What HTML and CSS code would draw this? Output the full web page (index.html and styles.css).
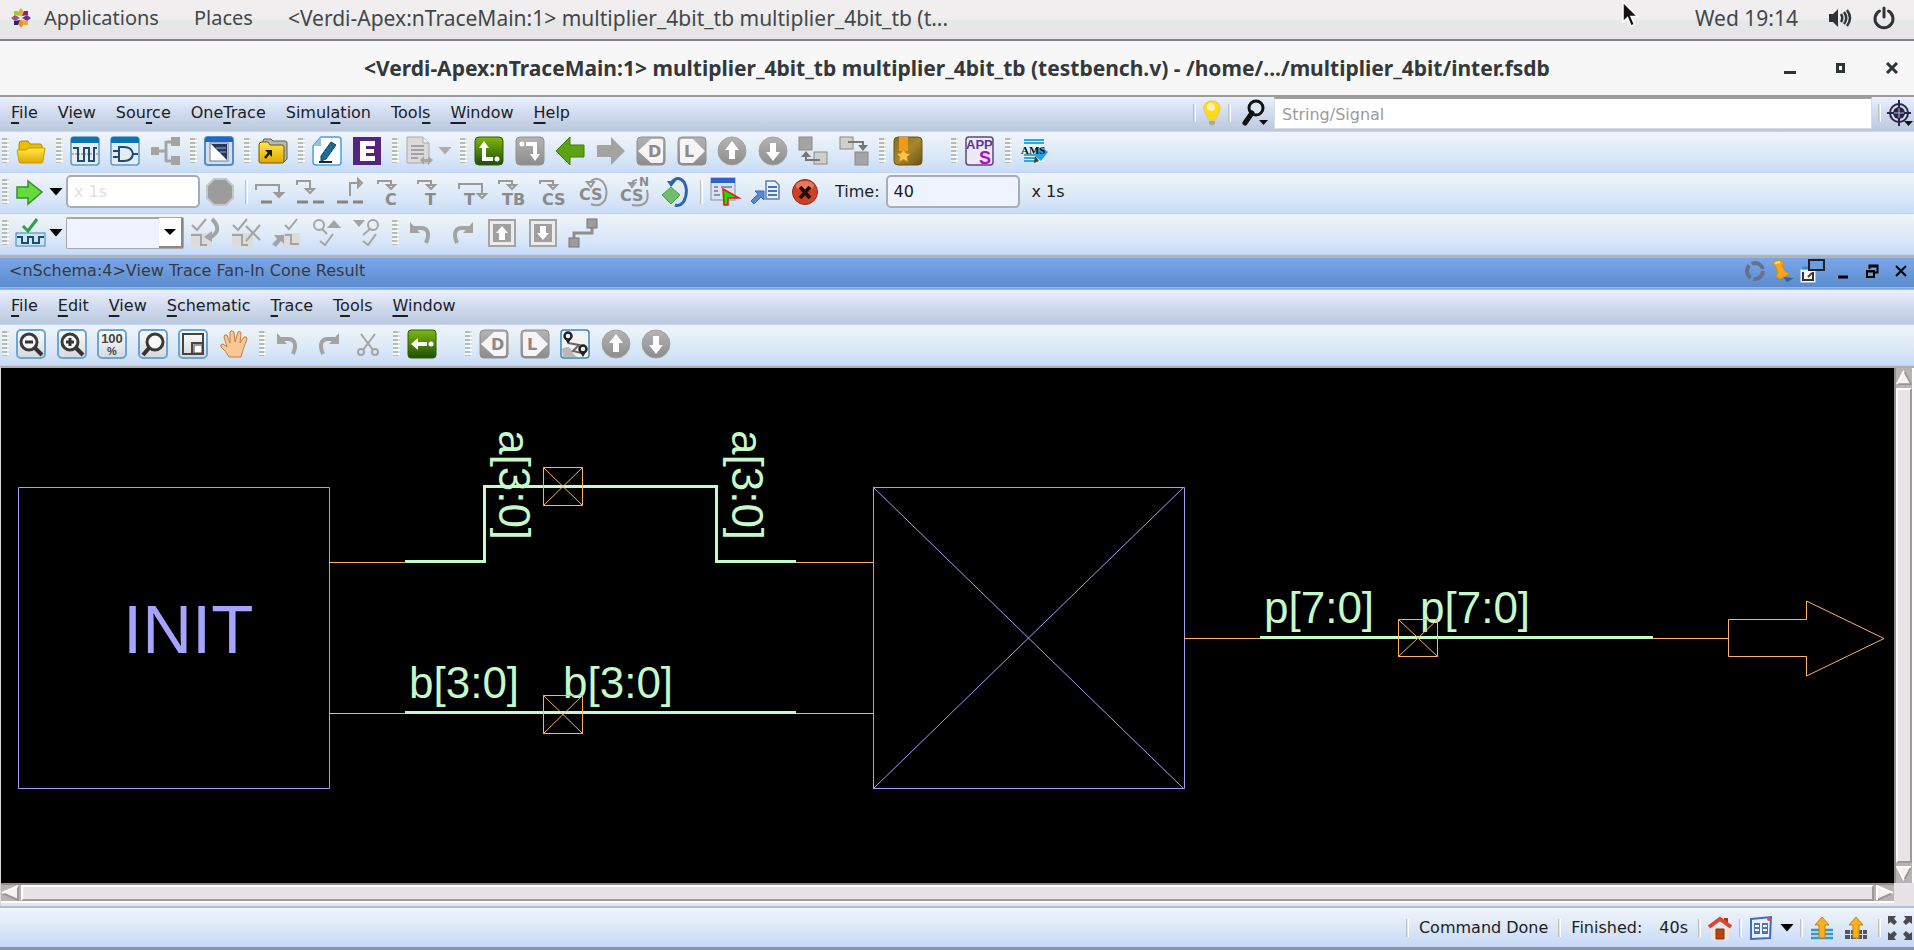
FILE: index.html
```html
<!DOCTYPE html>
<html lang="en">
<head>
<meta charset="utf-8">
<title>Verdi-Apex nTraceMain</title>
<link rel="stylesheet" href="styles.css">
</head>
<body>
<svg class="defs" aria-hidden="true">
  <defs>
    <linearGradient id="gGray" x1="0" y1="0" x2="0" y2="1"><stop offset="0" stop-color="#b4b4b4"/><stop offset="1" stop-color="#8c8c8c"/></linearGradient>
    <linearGradient id="gGreen" x1="0" y1="0" x2="0" y2="1"><stop offset="0" stop-color="#7fb80e"/><stop offset="1" stop-color="#1f4d05"/></linearGradient>
    <linearGradient id="gYellow" x1="0" y1="0" x2="0" y2="1"><stop offset="0" stop-color="#ffe94a"/><stop offset="1" stop-color="#e0a800"/></linearGradient>
    <linearGradient id="gBook" x1="0" y1="0" x2="1" y2="1"><stop offset="0" stop-color="#8a6a1c"/><stop offset=".5" stop-color="#a8872e"/><stop offset="1" stop-color="#6a5010"/></linearGradient>
    <linearGradient id="gPanel" x1="0" y1="0" x2="0" y2="1"><stop offset="0" stop-color="#fdfdfd"/><stop offset="1" stop-color="#d4d8dc"/></linearGradient>
  </defs>
  <symbol id="i-up" viewBox="0 0 30 30"><circle cx="15" cy="15" r="14" fill="url(#gGray)" stroke="#a2a2a2"/><path d="M15 5 22 14H18V23H12V14H8Z" fill="#fff"/></symbol>
  <symbol id="i-down" viewBox="0 0 30 30"><circle cx="15" cy="15" r="14" fill="url(#gGray)" stroke="#a2a2a2"/><path d="M15 25 22 16H18V7H12V16H8Z" fill="#fff"/></symbol>
  <symbol id="i-undo" viewBox="0 0 30 30"><path d="M8 10H15C22 10 24 16 20 25" fill="none" stroke="#a3a3a3" stroke-width="4"/><path d="M4 4V15H14Z" fill="#a3a3a3"/></symbol>
  <symbol id="i-redo" viewBox="0 0 30 30"><path d="M22 10H15C8 10 6 16 10 25" fill="none" stroke="#a3a3a3" stroke-width="4"/><path d="M26 4V15H16Z" fill="#a3a3a3"/></symbol>
</svg>

<header class="panel">
  <svg class="logo" width="20" height="20" viewBox="0 0 20 20"><path d="M10 0 13 4 10 9 7 4Z" fill="#e8b030"/><path d="M20 10 16 13 11 10 16 7Z" fill="#5b3590"/><path d="M10 20 7 16 10 11 13 16Z" fill="#e8902c"/><path d="M0 10 4 7 9 10 4 13Z" fill="#a14f8c"/><path d="M3 3H7L9 8 3 7Z" fill="#9ccd2a"/><path d="M13 3H17V7L11 8Z" fill="#932279"/><path d="M3 13 9 12 7 17H3Z" fill="#262577"/><path d="M11 12 17 13V17H13Z" fill="#efa724"/></svg>
  <button class="panel-item">Applications</button>
  <button class="panel-item">Places</button>
  <button class="panel-item panel-task">&lt;Verdi-Apex:nTraceMain:1&gt; multiplier_4bit_tb multiplier_4bit_tb (t...</button>
  <svg class="cursor" width="18" height="28" viewBox="0 0 18 28"><path d="M2 2V22L6.500 17.500 10 26 13.500 24.500 10 16.500H16.500Z" fill="#111" stroke="#fff" stroke-width="1.500"/></svg>
  <time class="clock">Wed 19:14</time>
  <button class="panel-icon" aria-label="Volume"><svg width="24" height="22" viewBox="0 0 24 22"><path d="M1 7H5L10 2V20L5 15H1Z" fill="#2e3436"/><path d="M13 7Q15.500 11 13 15M16 5Q20.500 11 16 17M19 3Q25 11 19 19" fill="none" stroke="#2e3436" stroke-width="2.500"/></svg></button>
  <button class="panel-icon" aria-label="Power"><svg width="24" height="24" viewBox="0 0 24 24"><path d="M7.500 5A9 9 0 1 0 16.500 5" fill="none" stroke="#2e3436" stroke-width="3" stroke-linecap="round"/><path d="M12 2V11" stroke="#2e3436" stroke-width="3" stroke-linecap="round"/></svg></button>
</header>

<div class="titlebar">
  <h1 class="title">&lt;Verdi-Apex:nTraceMain:1&gt; multiplier_4bit_tb multiplier_4bit_tb (testbench.v) - /home/.../multiplier_4bit/inter.fsdb</h1>
  <div class="window-buttons">
    <button aria-label="Minimize"><svg width="16" height="16" viewBox="0 0 16 16"><path d="M2 12.500H14" stroke="#2e3436" stroke-width="3"/></svg></button>
    <button aria-label="Maximize"><svg width="16" height="16" viewBox="0 0 16 16"><rect x="4.500" y="4.500" width="6" height="7" fill="none" stroke="#2e3436" stroke-width="3"/></svg></button>
    <button aria-label="Close"><svg width="16" height="16" viewBox="0 0 16 16"><path d="M3 3 13 13M13 3 3 13" stroke="#2e3436" stroke-width="3"/></svg></button>
  </div>
</div>

<nav class="menubar">
  <button><u>F</u>ile</button>
  <button>V<u>i</u>ew</button>
  <button>Sou<u>r</u>ce</button>
  <button>One<u>T</u>race</button>
  <button>Simul<u>a</u>tion</button>
  <button>Tool<u>s</u></button>
  <button><u>W</u>indow</button>
  <button><u>H</u>elp</button>
  <div class="search">
    <span class="sep"></span>
    <button aria-label="Tips"><svg width="20" height="26" viewBox="0 0 20 26"><path d="M10 1C4 1 1 5 2 10C3 14 6 16 6 20H14C14 16 17 14 18 10C19 5 16 1 10 1Z" fill="#ffd91c" stroke="#e8c85c"/><ellipse cx="9" cy="7" rx="4" ry="4" fill="#fff6a8"/><path d="M7 21H13V24L10 25.500 7 24Z" fill="#a8a8a0"/></svg></button>
    <span class="sep"></span>
    <button class="find" aria-label="Find"><svg width="26" height="28" viewBox="0 0 26 28"><circle cx="14" cy="9" r="7" fill="#dfe6f6" stroke="#111" stroke-width="3"/><path d="M10 14 3 24" stroke="#111" stroke-width="5" stroke-linecap="round"/><path d="M17 21H26L21.500 26Z" fill="#111"/></svg></button>
    <input type="text" class="search-input" placeholder="String/Signal" aria-label="String or signal">
    <span class="sep"></span>
    <button aria-label="Locate"><svg width="26" height="28" viewBox="0 0 26 28"><circle cx="12" cy="14" r="9" fill="#d8dcec" stroke="#26264a" stroke-width="2"/><circle cx="12" cy="14" r="6" fill="#26264a"/><path d="M12 1V27M0 14H24" stroke="#26264a" stroke-width="2"/><path d="M12 9V19M7 14H17" stroke="#b4b8d8"/><path d="M17 22H26L21.500 27Z" fill="#111"/></svg></button>
  </div>
</nav>

<div class="toolbar">
  <span class="handle"></span>
  <button class="tool" aria-label="Open"><svg viewBox="0 0 30 30"><path d="M3 8Q3 5 6 5H12L14 8H24Q26 8 26 10V25H3Z" fill="#e9bf00" stroke="#b08a00"/><path d="M1 14H10L13 12H29L27 25Q27 27 25 27H5Q3 27 3 25Z" fill="url(#gYellow)" stroke="#c79b00"/></svg></button>
  <span class="handle"></span>
  <div class="group">
    <button class="tool" aria-label="New waveform"><svg viewBox="0 0 30 30"><rect x="1" y="1" width="28" height="28" rx="3" fill="#e6edf2" stroke="#5a9cc6" stroke-width="1.500"/><path d="M1 7V4Q1 1 4 1H26Q29 1 29 4V7Z" fill="#0c74ac"/><path d="M2 18H28" stroke="#e05040" stroke-dasharray="2 1"/><path d="M3 12H8V25H14V12H19V25H24V12H27" fill="none" stroke="#1d4e72" stroke-width="2"/></svg></button>
    <button class="tool" aria-label="New schematic"><svg viewBox="0 0 30 30"><rect x="1" y="1" width="28" height="28" rx="3" fill="#e6edf2" stroke="#5a9cc6" stroke-width="1.500"/><path d="M1 7V4Q1 1 4 1H26Q29 1 29 4V7Z" fill="#0c74ac"/><path d="M9 11H14Q22 11 23 18Q22 25 14 25H9ZM3 15H9M3 21H9M23 18H28" fill="none" stroke="#1d4e72" stroke-width="2"/></svg></button>
    <button class="tool" aria-label="Hierarchy"><svg viewBox="0 0 30 30"><path d="M9 15H16M16 6H22M16 25H22M16 5V26" fill="none" stroke="#a4a4a4" stroke-width="3"/><path d="M1 11H9V19H1ZM21 1H30V10H21ZM21 20H30V29H21Z" fill="#a4a4a4"/></svg></button>
  </div>
  <span class="handle"></span>
  <button class="tool" aria-label="Source window"><svg viewBox="0 0 30 30"><rect x="1" y="1" width="28" height="28" rx="3" fill="#d4dfec" stroke="#4f8cd0" stroke-width="2"/><path d="M1 6V4Q1 1 4 1H26Q29 1 29 4V6Z" fill="#1f66c4"/><rect x="6" y="7" width="18" height="18" fill="#fff" stroke="#6d7b96"/><path d="M7 8H23V24Z" fill="#26365e"/><path d="M12 12H22M16 16H22" stroke="#9fb0d4"/></svg></button>
  <span class="handle"></span>
  <button class="tool" aria-label="Open recent"><svg viewBox="0 0 30 30"><path d="M5 5Q5 3 7 3H13L15 5H27Q29 5 29 7V23L26 26H5Z" fill="#b4b8bc" stroke="#5c5c50"/><path d="M1 9Q1 6 4 6H10L12 9H24Q26 9 26 11V25Q26 27 24 27H3Q1 27 1 25Z" fill="url(#gYellow)" stroke="#6d5a00"/><path d="M7 22 12 16" fill="none" stroke="#1c1a00" stroke-width="2.500"/><path d="M7 14H14V21Z" fill="#1c1a00"/></svg></button>
  <span class="handle"></span>
  <div class="group">
    <button class="tool" aria-label="Edit source"><svg viewBox="0 0 30 30"><path d="M9 1H26Q29 1 29 4V26Q29 29 26 29H4Q1 29 1 26V10Z" fill="#fdfeff" stroke="#4ba0dc" stroke-width="1.500"/><path d="M1 10H9V1Z" fill="#8fc4ec"/><path d="M9 20 19 6 24 9 14 23 9 25Z" fill="#1d6c9a" stroke="#0f4466"/><path d="M7 26H20" stroke="#222" stroke-width="2"/></svg></button>
    <button class="tool" aria-label="Editor"><svg viewBox="0 0 30 30"><rect x="1" y="1" width="28" height="28" fill="#56237f"/><path d="M8 5H23V10H14V13H22V17H14V20H23V25H8Z" fill="#fff"/></svg></button>
  </div>
  <span class="handle"></span>
  <button class="tool" aria-label="Report"><svg viewBox="0 0 30 30"><path d="M1 1H17L23 7V27H1Z" fill="#dadada" stroke="#aaa"/><path d="M17 1V7H23" fill="#efefef" stroke="#aaa"/><path d="M5 10H18M5 14H18M5 18H18M5 22H12" stroke="#a2a2a2" stroke-width="2"/><path d="M14 24 18 20V23H22V20L27 24 22 29V26H18V29Z" fill="#a5a5a5"/></svg></button>
  <button class="drop drop-dim" aria-label="Report options"></button>
  <span class="handle"></span>
  <div class="group group-wide">
    <button class="tool" aria-label="Trace up"><svg viewBox="0 0 30 30"><rect x="1" y="1" width="28" height="28" rx="4" fill="url(#gGreen)" stroke="#2c5f08"/><path d="M10 5 15 12H12V21H19V25H8V12H5Z" fill="#fff"/><circle cx="23" cy="23" r="2.500" fill="#fff"/></svg></button>
    <button class="tool" aria-label="Trace down"><svg viewBox="0 0 30 30"><rect x="1" y="1" width="28" height="28" rx="4" fill="url(#gGray)" stroke="#929292"/><circle cx="7" cy="8" r="2.500" fill="#fff"/><path d="M11 6H22V18H25L20 25 15 18H18V10H11Z" fill="#fff"/></svg></button>
    <button class="tool" aria-label="Back"><svg viewBox="0 0 30 30"><path d="M1 15 15 1V9H29V21H15V29Z" fill="#5ba312" stroke="#3f7c08"/></svg></button>
    <button class="tool" aria-label="Forward"><svg viewBox="0 0 30 30"><path d="M29 15 15 1V9H1V21H15V29Z" fill="#a3a3a3"/></svg></button>
    <button class="tool" aria-label="Trace driver"><svg viewBox="0 0 30 30"><rect x="1" y="1" width="28" height="28" rx="4" fill="url(#gGray)" stroke="#8e8e8e"/><path d="M2 15 15 3H25Q27 3 27 5V25Q27 27 25 27H15Z" fill="#f6f4f4"/><text x="12" y="21" class="glyph glyph-16">D</text></svg></button>
    <button class="tool" aria-label="Trace load"><svg viewBox="0 0 30 30"><rect x="1" y="1" width="28" height="28" rx="4" fill="url(#gGray)" stroke="#8e8e8e"/><path d="M28 15 16 3H5Q3 3 3 5V25Q3 27 5 27H16Z" fill="#f6f4f4"/><text x="7" y="21" class="glyph glyph-16">L</text></svg></button>
    <button class="tool" aria-label="Previous"><svg><use href="#i-up"/></svg></button>
    <button class="tool" aria-label="Next"><svg><use href="#i-down"/></svg></button>
    <button class="tool" aria-label="Signal up"><svg viewBox="0 0 30 30"><rect x="1" y="1" width="13" height="13" fill="#a4a4a4" stroke="#8a8a8a"/><rect x="16" y="16" width="13" height="12" fill="#cfcfcf" stroke="#8a8a8a"/><path d="M8 18V24H22" fill="none" stroke="#777" stroke-width="2"/><path d="M3 21 8 15 13 21Z" fill="#777"/></svg></button>
    <button class="tool" aria-label="Signal down"><svg viewBox="0 0 30 30"><rect x="1" y="1" width="13" height="12" fill="#cfcfcf" stroke="#8a8a8a"/><rect x="16" y="16" width="13" height="13" fill="#a4a4a4" stroke="#8a8a8a"/><path d="M9 6H24V11" fill="none" stroke="#777" stroke-width="2"/><path d="M19 9H29L24 15Z" fill="#777"/></svg></button>
  </div>
  <span class="handle"></span>
  <button class="tool" aria-label="Bookmarks"><svg viewBox="0 0 30 30"><rect x="1" y="1" width="28" height="28" rx="4" fill="url(#gBook)" stroke="#6b5314"/><path d="M6 1H15V15H6Z" fill="#f29a17"/><path d="M10.500 13 13 17 17 18 14 21 15 26 10.500 23.500 6 26 7 21 4 18 8 17Z" fill="#ffc24a" stroke="#d08a10"/></svg></button>
  <span class="handle handle-far"></span>
  <button class="tool" aria-label="Apps"><svg viewBox="0 0 30 30"><rect x="1" y="1" width="27" height="28" rx="3" fill="#eeeaf4" stroke="#5d4a72" stroke-width="1.500"/><text x="1" y="13" class="apps-text">APP</text><text x="14" y="28" class="apps-s">S</text></svg></button>
  <span class="handle"></span>
  <button class="tool" aria-label="AMS"><svg viewBox="0 0 30 30"><path d="M5 2H25V26H5Z" fill="#e4f5fc"/><path d="M5 4H25M5 7H25M5 19H18M5 22H17M5 25H16" stroke="#35a6d6" stroke-width="2"/><path d="M16 12H24L29 16 22 25 17 21Z" fill="#25a0d8"/><text x="2" y="18" class="ams-text">AMS</text><path d="M16 20 20 25 15 27Z" fill="#503a20"/></svg></button>
</div>

<div class="toolbar">
  <span class="handle"></span>
  <button class="tool" aria-label="Run"><svg viewBox="0 0 30 30"><path d="M1 10H12V4L26 15 12 27V21H1Z" fill="#63dc3c" stroke="#3c8c2c" stroke-width="1.500"/></svg></button>
  <button class="drop" aria-label="Run options"></button>
  <input type="text" class="field field-off" value="x 1s" aria-label="Step size" disabled>
  <button class="tool tool-stop" aria-label="Stop"><svg viewBox="0 0 30 30"><path d="M9 2H21L28 9V21L21 28H9L2 21V9Z" fill="#9c9c9c" stroke="#c6c6c6" stroke-width="2"/></svg></button>
  <span class="sep sep-wide"></span>
  <div class="group group-steps">
    <button class="tool" aria-label="Step over"><svg viewBox="0 0 30 30"><path d="M1 13V8H24V19M20 16 24 20 28 16Z" class="step"/><path d="M6 25H17" class="bar"/></svg></button>
    <button class="tool" aria-label="Step into"><svg viewBox="0 0 30 30"><path d="M1 8V4H14V13M10 12 14 16 18 12Z" class="step"/><path d="M1 25H12M17 25H28" class="bar"/></svg></button>
    <button class="tool" aria-label="Step out"><svg viewBox="0 0 30 30"><path d="M14 19V6H24M22 2 26 6 22 10Z" class="step"/><path d="M1 25H12M17 25H27" class="bar"/></svg></button>
    <button class="tool" aria-label="Next call"><svg viewBox="0 0 30 30"><path d="M1 7V4H14V9M10 8 14 12 18 8Z" class="step"/><text x="8" y="28" class="glyph glyph-16">C</text></svg></button>
    <button class="tool" aria-label="Next thread"><svg viewBox="0 0 30 30"><path d="M1 7V4H14V9M10 8 14 12 18 8Z" class="step"/><text x="8" y="28" class="glyph glyph-16">T</text></svg></button>
    <button class="tool" aria-label="Step thread"><svg viewBox="0 0 30 30"><path d="M1 12V7H24V18M20 17 24 21 28 17Z" class="step"/><text x="6" y="28" class="glyph glyph-16">T</text></svg></button>
    <button class="tool" aria-label="Step testbench"><svg viewBox="0 0 30 30"><path d="M1 7V4H14V9M10 8 14 12 18 8Z" class="step"/><text x="4" y="28" class="glyph glyph-16">TB</text></svg></button>
    <button class="tool" aria-label="Step constraint solver"><svg viewBox="0 0 30 30"><path d="M1 7V4H14V9M10 8 14 12 18 8Z" class="step"/><text x="3" y="28" class="glyph glyph-16">CS</text></svg></button>
    <button class="tool" aria-label="Loop constraint solver"><svg viewBox="0 0 30 30"><path d="M12 4Q18 -1 24 5Q30 13 26 23Q21 31 12 27M8 5H15L12 10Z" class="step"/><text x="0" y="23" class="glyph glyph-16">CS</text></svg></button>
    <button class="tool" aria-label="Next constraint solver"><svg viewBox="0 0 30 30"><path d="M17 3Q12 3 12 8M9 6H15L12 10ZM27 13Q31 31 12 28" class="step"/><text x="0" y="24" class="glyph glyph-16">CS</text><text x="19" y="9" class="glyph glyph-12">N</text></svg></button>
    <button class="tool" aria-label="Rerun"><svg viewBox="0 0 30 30"><path d="M12 5Q18 -2 24 5Q29 14 24 24Q20 30 15 28" fill="none" stroke="#2f63ae" stroke-width="3"/><path d="M7 4H16L11 10Z" fill="#2f63ae"/><path d="M11 10 20 18 11 27 2 18Z" fill="#6fbe68" stroke="#4a9c46"/></svg></button>
  </div>
  <span class="sep sep-wide"></span>
  <div class="group">
    <button class="tool" aria-label="Set cursor"><svg viewBox="0 0 30 30"><rect x="1" y="1" width="24" height="22" fill="#dde3ec" stroke="#7e8fae"/><path d="M1 1H25V6H1Z" fill="#2f62c8"/><path d="M4 10H8M11 10H22M4 14H8M4 18H10" stroke="#8a94a8" stroke-width="2"/><path d="M13 12 29 21 18 21V28H14Z" fill="#16e000" stroke="#e81818" stroke-width="1.500"/></svg></button>
    <button class="tool" aria-label="Dump"><svg viewBox="0 0 30 30"><path d="M16 4H25L29 8V22H16Z" fill="#eaf1fc" stroke="#5c7fae" stroke-width="1.500"/><path d="M18 10H27M18 14H27M18 18H27" stroke="#4472c0" stroke-width="2"/><path d="M1 24 8 17 5 14H14V23L11 20 4 27Z" fill="#5b87da" stroke="#3a66b8"/></svg></button>
    <button class="tool" aria-label="Abort"><svg viewBox="0 0 30 30"><circle cx="15" cy="15" r="12.500" fill="#cf4124" stroke="#8e2a14"/><ellipse cx="15" cy="9" rx="9" ry="5" fill="#e57a5c"/><path d="M10 10 20 21M20 10 10 21" stroke="#220a06" stroke-width="4"/></svg></button>
  </div>
  <label class="time-label" for="time">Time:</label>
  <input type="text" class="field" id="time" value="40">
  <span class="unit">x 1s</span>
</div>

<div class="toolbar">
  <span class="handle"></span>
  <button class="tool" aria-label="Verify waveform"><svg viewBox="0 0 30 30"><path d="M7 8 12 13 21 1" fill="none" stroke="#2fa044" stroke-width="3"/><rect x="0" y="15" width="29" height="13" fill="#cfe4f2" stroke="#3a86b4"/><path d="M1 19H6V25H12V19H17V25H23V19H28" fill="none" stroke="#1d4e72" stroke-width="2"/></svg></button>
  <button class="drop" aria-label="Verify options"></button>
  <span class="combo"><select aria-label="Assertion"><option></option></select><span class="combo-arrow"></span></span>
  <div class="group group-five">
    <button class="tool" aria-label="Apply"><svg viewBox="0 0 30 30"><path d="M1 15H22V29H1Z" fill="#dcdcdc"/><path d="M2 7 7 12 16 1M1 17H11V27H17" class="dim"/><path d="M22 1Q33 12 21 19" fill="none" stroke="#a4a4a4" stroke-width="4"/><path d="M14 19 22 13V24Z" fill="#a4a4a4"/></svg></button>
    <button class="tool" aria-label="Remove"><svg viewBox="0 0 30 30"><path d="M1 15H22V29H1Z" fill="#dcdcdc"/><path d="M2 7 7 12 16 1M1 17H11V27H17M15 8 29 22M29 7 15 23" class="dim"/></svg></button>
    <button class="tool" aria-label="Go to"><svg viewBox="0 0 30 30"><path d="M12 15H29V29H12Z" fill="#dcdcdc"/><path d="M14 7 18 11 26 1M14 17H20V26H28" class="dim"/><path d="M1 26 6 21 3 17H13V26L10 23 5 29Z" fill="#a4a4a4"/></svg></button>
    <button class="tool" aria-label="Find previous"><svg viewBox="0 0 30 30"><circle cx="7" cy="7" r="5" class="dim"/><path d="M10 11 15 16M8 23 13 27 21 16" class="dim"/><path d="M15 10 22 2 29 10Z" fill="#a4a4a4"/></svg></button>
    <button class="tool" aria-label="Find next"><svg viewBox="0 0 30 30"><circle cx="21" cy="7" r="5" class="dim"/><path d="M18 11 11 17M11 23 16 27 24 16" class="dim"/><path d="M1 2H13L7 9Z" fill="#a4a4a4"/></svg></button>
  </div>
  <span class="handle"></span>
  <div class="group group-five">
    <button class="tool" aria-label="Undo"><svg><use href="#i-undo"/></svg></button>
    <button class="tool" aria-label="Redo"><svg><use href="#i-redo"/></svg></button>
    <button class="tool" aria-label="Scope up"><svg viewBox="0 0 30 30"><rect x="2" y="2" width="26" height="26" fill="#ececec" stroke="#a4a4a4" stroke-width="2"/><rect x="6" y="6" width="18" height="18" fill="#a0a0a0"/><path d="M15 8 21 15H18V22H12V15H9Z" fill="#fff"/></svg></button>
    <button class="tool" aria-label="Scope down"><svg viewBox="0 0 30 30"><rect x="2" y="2" width="26" height="26" fill="#ececec" stroke="#a4a4a4" stroke-width="2"/><rect x="6" y="6" width="18" height="18" fill="#a0a0a0"/><path d="M15 22 21 15H18V8H12V15H9Z" fill="#fff"/></svg></button>
    <button class="tool" aria-label="Connect"><svg viewBox="0 0 30 30"><path d="M6 22V15H24V8" fill="none" stroke="#8e8e8e" stroke-width="3"/><rect x="19" y="1" width="10" height="9" fill="#9c9c9c" stroke="#777"/><rect x="1" y="20" width="10" height="9" fill="#9c9c9c" stroke="#777"/></svg></button>
  </div>
</div>

<div class="subtitle">
  <h2>&lt;nSchema:4&gt;View Trace Fan-In Cone Result</h2>
  <div class="sub-buttons">
    <button aria-label="Refresh"><svg width="22" height="22" viewBox="0 0 22 22"><circle cx="11" cy="11" r="8" fill="none" stroke="#68708e" stroke-width="4" stroke-dasharray="14 3"/></svg></button>
    <button aria-label="Pin"><svg width="26" height="24" viewBox="0 0 26 24"><path d="M13 18 24 19 17 23Z" fill="#3c5f9a"/><path d="M2 4 9 1 14 3 12 7 15 12 19 15 10 20 6 17 8 14 6 8Z" fill="#f7a71c" stroke="#e08a08"/><path d="M5 4 10 3" stroke="#ffe08a" stroke-width="2"/></svg></button>
    <button aria-label="Undock"><svg width="26" height="26" viewBox="0 0 26 26"><rect x="2" y="13" width="12" height="10" fill="#f4f4f4" stroke="#f4f4f4" stroke-width="3"/><path d="M3 14V22H13V14" fill="none" stroke="#333" stroke-width="2"/><path d="M2 10H14" stroke="#2d8cf0" stroke-width="3"/><rect x="9" y="2" width="15" height="10" fill="#6d9ce2" stroke="#222" stroke-width="2"/><path d="M8 19 12 15" stroke="#444" stroke-width="2"/></svg></button>
    <button class="sub-win" aria-label="Minimize"><svg width="14" height="16" viewBox="0 0 14 16"><path d="M2 14H12" stroke="#000" stroke-width="3"/></svg></button>
    <button class="sub-win" aria-label="Restore"><svg width="14" height="16" viewBox="0 0 14 16"><path d="M4.500 6V2.500H12.500V9.500H10M4 3.500H13" fill="none" stroke="#000" stroke-width="2"/><path d="M2 8H9V14H2ZM2 8.500H9" fill="none" stroke="#000" stroke-width="2"/></svg></button>
    <button class="sub-win" aria-label="Close"><svg width="14" height="16" viewBox="0 0 14 16"><path d="M2 3 12 13M12 3 2 13" stroke="#000" stroke-width="2"/></svg></button>
  </div>
</div>

<nav class="menubar">
  <button><u>F</u>ile</button>
  <button><u>E</u>dit</button>
  <button><u>V</u>iew</button>
  <button><u>S</u>chematic</button>
  <button><u>T</u>race</button>
  <button>T<u>o</u>ols</button>
  <button><u>W</u>indow</button>
</nav>

<div class="toolbar">
  <span class="handle"></span>
  <div class="group group-zoom">
    <button class="tool" aria-label="Zoom out"><svg viewBox="0 0 30 30"><rect x="1" y="1" width="28" height="28" rx="4" class="tile"/><circle cx="13" cy="13" r="8" class="lens"/><path d="M9 13H17" stroke="#333" stroke-width="3"/><path d="M19 19 26 26" stroke="#333" stroke-width="4"/></svg></button>
    <button class="tool" aria-label="Zoom in"><svg viewBox="0 0 30 30"><rect x="1" y="1" width="28" height="28" rx="4" class="tile"/><circle cx="13" cy="13" r="8" class="lens"/><path d="M9 13H17M13 9V17" stroke="#333" stroke-width="3"/><path d="M19 19 26 26" stroke="#333" stroke-width="4"/></svg></button>
    <button class="tool" aria-label="Zoom 100%"><svg viewBox="0 0 30 30"><rect x="1" y="1" width="28" height="28" rx="4" class="tile"/><text x="15" y="14" class="pct pct-top">100</text><text x="15" y="26" class="pct">%</text></svg></button>
    <button class="tool" aria-label="Zoom area"><svg viewBox="0 0 30 30"><rect x="1" y="1" width="28" height="28" rx="4" class="tile"/><circle cx="17" cy="13" r="8" class="lens"/><path d="M11 19 5 26" stroke="#333" stroke-width="4"/></svg></button>
    <button class="tool" aria-label="Fit"><svg viewBox="0 0 30 30"><rect x="1" y="1" width="28" height="28" rx="4" class="tile"/><path d="M5 5H25V25H5ZM14 25V14H25" fill="none" stroke="#444" stroke-width="2"/><rect x="16" y="16" width="8" height="8" fill="#fff" stroke="#444"/></svg></button>
    <button class="tool" aria-label="Pan"><svg viewBox="0 0 30 30"><path d="M10 28Q7 22 2 18Q1 15 4 15L8 18 5 8Q5 5 8 6L11 14 11 3Q12 0 15 3L16 13 19 3Q21 1 22 4L21 14 25 8Q28 7 28 10L24 21 22 28Z" fill="#f7c795" stroke="#c4803c"/></svg></button>
  </div>
  <span class="handle"></span>
  <div class="group">
    <button class="tool" aria-label="Undo"><svg><use href="#i-undo"/></svg></button>
    <button class="tool" aria-label="Redo"><svg><use href="#i-redo"/></svg></button>
    <button class="tool" aria-label="Cut"><svg viewBox="0 0 30 30"><path d="M8 5 20 21M22 5 10 21" stroke="#a4a4a4" stroke-width="2"/><circle cx="8" cy="23" r="3" class="dim"/><circle cx="22" cy="23" r="3" class="dim"/></svg></button>
  </div>
  <span class="handle"></span>
  <button class="tool" aria-label="Fan-in"><svg viewBox="0 0 30 30"><rect x="1" y="1" width="28" height="28" rx="3" fill="url(#gGreen)" stroke="#2c5f08"/><path d="M4 15 11 9V13H20V17H11V21Z" fill="#fff"/><circle cx="24" cy="15" r="2.500" fill="#fff"/></svg></button>
  <span class="handle handle-far"></span>
  <div class="group group-five">
    <button class="tool" aria-label="Trace driver"><svg viewBox="0 0 30 30"><rect x="1" y="1" width="28" height="28" rx="4" fill="url(#gGray)" stroke="#8e8e8e"/><path d="M2 15 15 3H25Q27 3 27 5V25Q27 27 25 27H15Z" fill="#f6f4f4"/><text x="12" y="21" class="glyph glyph-16">D</text></svg></button>
    <button class="tool" aria-label="Trace load"><svg viewBox="0 0 30 30"><rect x="1" y="1" width="28" height="28" rx="4" fill="url(#gGray)" stroke="#8e8e8e"/><path d="M28 15 16 3H5Q3 3 3 5V25Q3 27 5 27H16Z" fill="#f6f4f4"/><text x="7" y="21" class="glyph glyph-16">L</text></svg></button>
    <button class="tool" aria-label="Trace path"><svg viewBox="0 0 30 30"><rect x="1" y="1" width="28" height="28" rx="3" fill="#f2f2f2" stroke="#3f86bf" stroke-width="1.500"/><path d="M2 20Q9 15 12 22T20 28H3Z" fill="#b8b8b8"/><path d="M8 14 19 16 13 22 21 24" fill="none" stroke="#666" stroke-width="2"/><circle cx="8" cy="7" r="3.500" fill="none" stroke="#222" stroke-width="2.500"/><path d="M5 10 8 15 11 10Z" fill="#222"/><circle cx="23" cy="20" r="3.500" fill="none" stroke="#222" stroke-width="2.500"/><path d="M20 23 23 28 26 23Z" fill="#222"/></svg></button>
    <button class="tool" aria-label="Previous"><svg><use href="#i-up"/></svg></button>
    <button class="tool" aria-label="Next"><svg><use href="#i-down"/></svg></button>
  </div>
</div>

<main class="view">
  <svg class="schematic" role="img" aria-label="Fan-in cone schematic">
    <g transform="translate(-1 -368)">
      <path class="block" d="M18.500 487.500H329.500V788.500H18.500Z"/>
      <path class="block" d="M873.500 487.500H1184.500V788.500H873.500Z"/>
      <path class="block" d="M873 487 1184 789M1184 487 873 789"/>
      <text class="net" transform="translate(499 430) rotate(90)">a[3:0]</text>
      <text class="net" transform="translate(732 430) rotate(90)">a[3:0]</text>
      <text class="net" x="409" y="698">b[3:0]</text>
      <text class="net" x="563" y="698">b[3:0]</text>
      <text class="net" x="1264" y="623">p[7:0]</text>
      <text class="net" x="1420" y="623">p[7:0]</text>
      <path class="wire" d="M405 561.500H484.500V486.500H716.500V561.500H796M405 712.500H796M1260 637.500H1653"/>
      <path class="pin" d="M329 562.500H406M796 562.500H873M329 713.500H406M796 713.500H873M1184 638.500H1260M1652 638.500H1728"/>
      <path class="pin" d="M543.500 467.500H582.500V505.500H543.500ZL582.500 505.500M582.500 467.500 543.500 505.500"/>
      <path class="pin" d="M543.500 695.500H582.500V733.500H543.500ZL582.500 733.500M582.500 695.500 543.500 733.500"/>
      <path class="pin" d="M1398.500 619.500H1437.500V656.500H1398.500ZL1437.500 656.500M1437.500 619.500 1398.500 656.500"/>
      <path class="pin" d="M1728.500 619.500H1806.500V601L1884 638.500 1806.500 676V656.500H1728.500Z"/>
      <text class="init" x="123" y="653">INIT</text>
    </g>
  </svg>
  <div class="scroll scroll-v">
    <svg width="16" height="18" viewBox="0 0 18 18"><path d="M9 2 17 17H1Z" fill="#f4f1f1"/><path d="M9 2 17 17H1" fill="none" stroke="#9a9696" stroke-width="2"/><path d="M9 2 1 17" stroke="#fff" stroke-width="2"/></svg>
    <span class="thumb"></span>
    <svg width="16" height="18" viewBox="0 0 18 18"><path d="M1 1H17L9 16Z" fill="#f4f1f1"/><path d="M17 1 9 16" stroke="#9a9696" stroke-width="2"/><path d="M17 1H1L9 16" fill="none" stroke="#fff" stroke-width="2"/></svg>
  </div>
  <div class="scroll scroll-h">
    <svg width="18" height="16" viewBox="0 0 18 16"><path d="M1 8 17 1V15Z" fill="#f4f1f1"/><path d="M17 1V15L1 8" fill="none" stroke="#9a9696" stroke-width="2"/><path d="M17 1 1 8" stroke="#fff" stroke-width="2"/></svg>
    <span class="thumb"></span>
    <svg width="18" height="16" viewBox="0 0 18 16"><path d="M17 8 1 1V15Z" fill="#f4f1f1"/><path d="M1 15 17 8" stroke="#9a9696" stroke-width="2"/><path d="M1 15V1L17 8" fill="none" stroke="#fff" stroke-width="2"/></svg>
  </div>
  <div class="corner"></div>
</main>

<footer class="status">
  <span class="sep"></span>
  <span class="status-text">Command Done</span>
  <span class="sep"></span>
  <span class="status-text">Finished:<span class="elapsed">40s</span></span>
  <span class="sep"></span>
  <button aria-label="Home"><svg width="26" height="26" viewBox="0 0 26 26"><path d="M4 12H22V25H4Z" fill="#ece4de"/><path d="M17 3H21V9H17Z" fill="#b83010"/><path d="M2 12 13 4 24 12" fill="none" stroke="#d8482c" stroke-width="4"/><path d="M9 14H17V24H9Z" fill="#b8440f" stroke="#8a3208"/></svg></button>
  <span class="sep"></span>
  <button aria-label="Windows"><svg width="26" height="26" viewBox="0 0 26 26"><path d="M3 4 23 2 22 23 3 24Z" fill="#e9f0fc" stroke="#3a6cc4" stroke-width="2"/><path d="M6 8H12V19H6ZM14 8H20V19H14Z" fill="#4d74b4"/><path d="M7 11H11M7 15H11M15 11H19M15 15H19" stroke="#fff" stroke-width="2"/><circle cx="21" cy="4" r="2" fill="#e05050"/></svg></button>
  <button class="drop" aria-label="Window list"></button>
  <span class="sep"></span>
  <button aria-label="Raise signals"><svg width="26" height="26" viewBox="0 0 26 26"><path d="M2 15H24M2 19H24M2 23H24" stroke="#3a9ab8" stroke-width="2.500"/><path d="M13 2 20 10H16V23H10V10H6Z" fill="#f9b021" stroke="#c8820a"/></svg></button>
  <button class="raise" aria-label="Raise all"><svg width="26" height="26" viewBox="0 0 26 26"><path d="M2 17H24M2 22H24" stroke="#555" stroke-width="4" stroke-dasharray="5 1"/><path d="M13 2 20 10H16V23H10V10H6Z" fill="#f9b021" stroke="#c8820a"/></svg></button>
  <span class="sep"></span>
  <button aria-label="Full screen"><svg width="26" height="26" viewBox="0 0 26 26"><path d="M1 1H9L7 3.500 10 7 7 10 3.500 7 1 9ZM25 1V9L22.500 7 19 10 16 7 19 3.500 17 1ZM1 25V17L3.500 19 7 16 10 19 7 22.500 9 25ZM25 25H17L19 22.500 16 19 19 16 22.500 19 25 17Z" fill="#4a4a50"/></svg></button>
</footer>
</body>
</html>
```

FILE: styles.css
```css
* { box-sizing: border-box; }

body {
  margin: 0;
  min-height: 100vh;
  display: flex;
  flex-direction: column;
  background: #f0eeee;
  color: #1b1e24;
  font: 16px/20px "DejaVu Sans", sans-serif;
  overflow: hidden;
}

button {
  border: 0;
  padding: 0;
  background: none;
  color: inherit;
  font: inherit;
  white-space: nowrap;
}

svg { display: block; }
.defs { position: absolute; width: 0; height: 0; }

/* Desktop panel */
.panel {
  display: flex;
  align-items: center;
  height: 41px;
  padding: 0 18px 4px 11px;
  border-bottom: 2px solid #858484;
  background: linear-gradient(#f1eef0 0 45%, #e6e8e7 55%, #e6e8e7 75%, #e9e4e7 80%);
  color: #43474a;
  font: 20px/28px "Noto Sans", sans-serif;
}
.logo { margin-right: 13px; }
.panel-item { margin-right: 35px; }
.panel-task { margin-right: auto; }
.panel-task, .clock { font-size: 21px; }
.cursor { margin: -8px 56px 0 0; }
.clock { margin-right: 30px; }
.panel-icon { margin-right: 20px; }
.panel-icon:last-child { margin-right: 0; }

/* Window title */
.titlebar {
  display: grid;
  grid-template-columns: 1fr auto 1fr;
  align-items: center;
  height: 56px;
  padding: 0 14px;
  border-bottom: 2px solid #9c9b98;
  background: #f7f7f7;
}
.title {
  grid-column: 2;
  margin: 0;
  color: #33393b;
  font: 700 21px/28px "Noto Sans", sans-serif;
  white-space: nowrap;
}
.window-buttons { display: flex; justify-content: flex-end; gap: 35px; }

/* Menus */
.menubar {
  display: flex;
  align-items: center;
  gap: 20px;
  height: 35px;
  padding: 0 1px 3px 11px;
  border-bottom: 1px solid #c4d6f4;
  background: linear-gradient(#e9f0ff, #d3dcf0 45%, #b9c9dd);
}
.menubar u {
  text-decoration-thickness: 2px;
  text-underline-offset: 4px;
  text-decoration-skip-ink: none;
}
.search {
  display: flex;
  flex: 0 1 720px;
  align-items: center;
  gap: 6px;
  margin-left: auto;
}
.find { margin-left: 5px; }
.search-input {
  flex: 1;
  min-width: 0;
  height: 32px;
  padding: 2px 7px 0;
  border: 1px solid #d9dde2;
  border-top: 2px solid #9f9f9f;
  background: #fff;
  font: 16px/20px "DejaVu Sans", sans-serif;
}
.search-input::placeholder { color: #9c9a9c; opacity: 1; }
.sep {
  flex: none;
  width: 3px;
  height: 18px;
  border-left: 1px solid #b9c0cc;
  border-right: 1px solid #fff;
}
.sep-wide { height: 24px; margin: 0 7px 0 10px; }

/* Toolbars */
.toolbar {
  display: flex;
  align-items: center;
  height: 41px;
  padding-bottom: 3px;
  border-bottom: 1px solid #c0d3f2;
  background: linear-gradient(#f0f4fd, #e9f1f7 20%, #dbe8f7 60%, #c8dbf8);
}
.handle {
  flex: none;
  width: 7px;
  height: 25px;
  margin: 0 7px 0 10px;
  border-right: 2px solid #fff8;
  background: repeating-linear-gradient(#b4bcb8 0 2px, #f4f6f6 2px 4px);
}
.handle:first-child { margin-left: 2px; }
.handle-far { margin-left: 28px; }
.group { display: flex; gap: 10px; }
.group-wide { width: 395px; gap: 0; justify-content: space-between; }
.group-steps { width: 435px; gap: 0; justify-content: space-between; }
.group-five { width: 192px; gap: 0; justify-content: space-between; }
.group-zoom { width: 233px; gap: 0; justify-content: space-between; }
.tool { flex: none; width: 30px; height: 30px; }
.tool svg { width: 30px; height: 30px; overflow: visible; }
.tool-stop { margin-left: 5px; }
.drop {
  flex: none;
  width: 14px;
  height: 8px;
  margin: 0 3px;
  background: #000;
  clip-path: polygon(0 0, 100% 0, 50% 100%);
}
.drop-dim { margin: 0 -2px 0 2px; background: #b4acac; }
.field {
  width: 134px;
  height: 33px;
  padding: 0 6px;
  border: 2px solid #a7adb2;
  border-radius: 5px;
  background: #eff3ff;
  color: #1b1e24;
  font: 16px/20px "DejaVu Sans", sans-serif;
}
.field-off { background: #fff; color: #e2dee0; }
.time-label { margin: 0 6px 0 15px; }
.unit { margin-left: 12px; }
.combo { position: relative; width: 118px; height: 32px; margin-right: 6px; }
.combo select {
  width: 100%;
  height: 100%;
  border: 1px solid #a7a7a7;
  border-top-width: 2px;
  border-radius: 2px;
  background: #eff3ff;
  appearance: none;
}
.combo-arrow {
  position: absolute;
  inset: 1px 1px 1px auto;
  display: grid;
  place-items: center;
  width: 24px;
  border-right: 2px solid #8a8a8a;
  border-bottom: 2px solid #8a8a8a;
  background: #fff;
  pointer-events: none;
}
.combo-arrow::before {
  content: "";
  border: 6px solid transparent;
  border-top-color: #000;
  border-bottom: 0;
}

/* Icon parts */
.glyph { fill: #8a8a8a; font-family: "DejaVu Sans", sans-serif; font-weight: 700; }
.glyph-12 { font-size: 12px; }
.glyph-16 { font-size: 16px; }
.step { fill: none; stroke: #9a9a9a; stroke-width: 2; }
.bar { stroke: #858585; stroke-width: 3; }
.dim { fill: none; stroke: #a4a4a4; stroke-width: 2; }
.tile { fill: url(#gPanel); stroke: #6aa4d8; stroke-width: 2; }
.lens { fill: #f8f8f8; stroke: #3a3a3a; stroke-width: 3; }
.pct { fill: #444; font: 700 11px "Liberation Sans", sans-serif; text-anchor: middle; }
.pct-top { font-size: 13px; }
.apps-text { fill: #5b3a9a; font: 700 13px "Liberation Sans", sans-serif; }
.apps-s { fill: #b10ad0; font: 700 18px "Liberation Sans", sans-serif; }
.ams-text { fill: #111; font: 700 11px "Liberation Serif", serif; }

/* Schematic sub-window title */
.subtitle {
  display: flex;
  align-items: center;
  justify-content: space-between;
  height: 35px;
  padding: 0 6px 4px 9px;
  border-top: 3px solid #b3b3b0;
  border-bottom: 3px double #a8b4c4;
  background: linear-gradient(#7ba7ea, #5a8bcc);
  color: #343a46;
}
.subtitle h2 { margin: 0; font: 16px/20px "DejaVu Sans", sans-serif; }
.sub-buttons { display: flex; align-items: center; gap: 4px; }
.sub-win { margin-left: 6px; }
.sub-win + .sub-win { margin-left: 11px; }

/* Drawing area */
.view {
  flex: 1;
  display: grid;
  grid-template: minmax(0, 1fr) 23px / minmax(0, 1fr) 20px;
  border-top: 2px solid #b0aeac;
  border-left: 1px solid #d8d8d8;
  background: #e7e3e6;
}
.schematic { width: 100%; height: 100%; background: #000; }
.block { fill: none; stroke: #a0a0ff; }
.pin { fill: none; stroke: #ffb066; }
.wire { fill: none; stroke: #c4fcc8; stroke-width: 3; }
.net { fill: #c4f9c8; font: 44px "Liberation Sans", sans-serif; }
.init { fill: #a5a5ff; font: 69px "Liberation Sans", sans-serif; }
.scroll { display: flex; gap: 2px; background: #b9b4b3; }
.scroll svg { flex: none; }
.scroll-v {
  flex-direction: column;
  padding: 0;
  border-left: 2px solid #8f8f8c;
  border-right: 2px solid #fff;
}
.scroll-h {
  height: 20px;
  border-top: 2px solid #8f8f8c;
  border-bottom: 2px solid #fff;
}
.thumb {
  flex: 1;
  border: 2px solid #fff;
  border-right-color: #9d9a9a;
  border-bottom-color: #9d9a9a;
  background: #e8e3e7;
}

/* Status bar */
.status {
  display: flex;
  align-items: center;
  justify-content: flex-end;
  gap: 6px;
  height: 44px;
  padding: 0 1px 0 0;
  border-top: 2px solid #a9bfe2;
  border-bottom: 3px solid #8d93a0;
  background: linear-gradient(#f0f4fb, #dfe9f6 45%, #c6d9f8);
}
.status-text { margin: 0 4px; }
.elapsed { margin-left: 17px; }
.status .drop { margin: 0; }
.raise { margin: 0 3px 0 2px; }
```
